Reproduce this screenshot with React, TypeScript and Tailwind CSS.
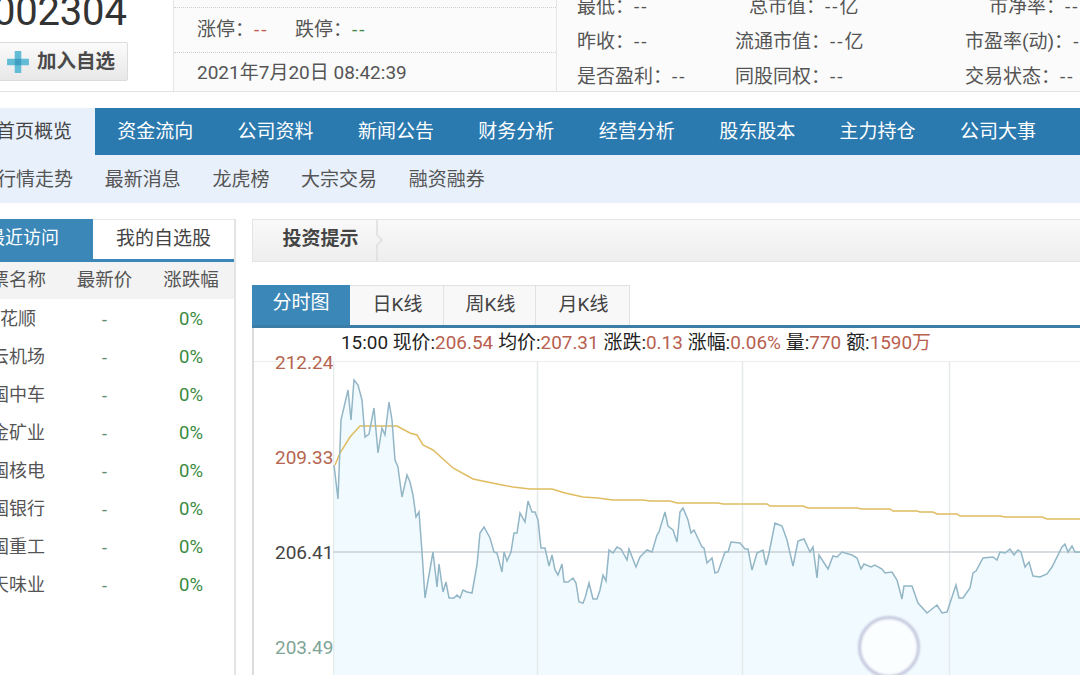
const price = "334,465 338,499 341,420 348,390 351,420 354,380 358,385 362,400 365,437 369,434 374,408 378,453 382,428 385,435 389,402 392,420 395,460 398,467 399,475 402,497 407,475 410,482 413,495 416,517 419,512 422,552 425,598 433,552 437,587 439,564 443,592 446,582 449,598 454,598 457,595 460,598 463,590 467,592 472,593 477,565 480,533 484,527 490,538 494,552 497,553 502,572 504,552 507,561 511,552 514,533 517,533 520,513 525,522 528,501 532,512 535,512 538,520 541,548 545,548 549,566 552,555 555,570 558,575 562,564 564,582 568,582 573,578 576,583 579,602 583,603 585,598 589,583 593,599 597,599 600,590 603,575 606,581 609,550 613,553 617,547 621,549 627,560 629,549 636,567 640,557 647,550 652,552 657,535 659,532 665,512 668,526 673,530 677,542 680,512 683,508 688,520 691,533 694,530 702,547 704,548 707,563 712,558 715,573 718,572 725,552 728,552 731,542 740,543 745,549 748,549 752,570 757,553 763,550 766,565 769,553 775,523 782,526 787,540 793,566 798,541 804,539 810,552 813,547 817,578 819,555 828,569 833,556 837,557 842,552 852,555 857,558 861,569 864,564 871,567 875,565 882,569 885,573 892,572 897,580 902,599 904,586 912,586 918,603 927,613 937,605 942,613 947,612 956,585 959,598 963,598 970,588 973,573 976,571 983,558 993,557 997,560 1000,552 1005,553 1010,549 1014,555 1018,550 1021,552 1025,567 1029,562 1033,576 1040,577 1047,574 1052,567 1062,547 1065,544 1068,552 1072,546 1075,552 1080,552";
const avg = "335,465 340,453 350,437 360,426 383,426 397,426 410,433 417,435 423,445 433,450 453,468 473,479 497,484 513,487 530,489 552,489 565,493 583,497 598,498 613,500 643,500 650,501 670,501 677,503 718,503 723,504 767,504 770,506 803,506 808,508 857,508 862,509 890,509 893,511 917,511 920,512 933,512 937,514 957,514 960,516 1000,516 1005,517 1042,517 1047,519 1080,519";

const nav = ["资金流向", "公司资料", "新闻公告", "财务分析", "经营分析", "股东股本", "主力持仓", "公司大事"];
const sub = ["最新消息", "龙虎榜", "大宗交易", "融资融券"];
const stocks = ["同花顺", "白云机场", "中国中车", "紫金矿业", "中国核电", "中国银行", "中国重工", "海天味业"];
const stats = [
  { a: "最低：", b: "总市值：", bv: "亿", c: "市净率：", bp: "pl-[14px]", cp: "pl-[24px]" },
  { a: "昨收：", b: "流通市值：", bv: "亿", c: "市盈率(动)：", bp: "", cp: "" },
  { a: "是否盈利：", b: "同股同权：", bv: "", c: "交易状态：", bp: "", cp: "" },
];
const ktabs = ["日K线", "周K线", "月K线"];
const ktabW = ["w-[94px]", "w-[92px]", "w-[94px]"];

function Dash({ className = "" }: { className?: string }) {
  return <span className={`tracking-[2px] ${className}`}>--</span>;
}

function Plus() {
  return (
    <svg width="24" height="24" viewBox="0 0 22 22" className="shrink-0 blur-[0.5px]">
      <path d="M8 1h6v7h7v6h-7v7H8v-7H1V8h7z" fill="#62bcd6" />
      <path d="M8 8h6v6H8z" fill="#3f9fc0" />
    </svg>
  );
}

export default function App() {
  return (
    <div className="relative w-[1080px] h-[675px] overflow-hidden bg-white text-[#555] text-[19px] font-[Roboto,'Noto_Sans_CJK_SC',sans-serif]">
      {/* header */}
      <div className="flex h-[92px] border-b border-[#e2e2e2]">
        <div className="w-[173px] shrink-0 overflow-hidden">
          <div className="-mt-[11px] -ml-[7px] text-[40px] leading-[46px] text-[#333] tracking-[-0.2px]">002304</div>
          <div className="-ml-[10px] mt-[7px] w-[138px] h-[39px] flex items-center gap-[7px] pl-[15px] rounded-[2px] border border-[#dcdcdc] bg-gradient-to-b from-[#fbfbfb] to-[#e8e8e8] text-[19.5px] font-bold text-[#4a4a4a]">
            <Plus />
            <span className="whitespace-nowrap">加入自选</span>
          </div>
        </div>
        <div className="w-[384px] shrink-0 border-x border-[#e6e6e6] bg-[#fbfbfb]">
          <div className="h-[8px] border-b border-dotted border-[#cfcfcf]" />
          <div className="h-[45px] flex items-center pl-[23px] border-b border-dotted border-[#cfcfcf]">
            <span>涨停：</span>
            <Dash className="text-[#c05a4a] w-[41px]" />
            <span>跌停：</span>
            <Dash className="text-[#3f8a45]" />
          </div>
          <div className="h-[38px] flex items-center pl-[23px] pt-[2px]">2021年7月20日 08:42:39</div>
        </div>
        <div className="flex-1 -mt-[10px] pl-[20px] bg-[#fbfbfb]">
          {stats.map((r) => (
            <div key={r.a} className="h-[35px] flex items-center whitespace-nowrap">
              <span className="w-[158px] shrink-0">{r.a}<Dash /></span>
              <span className={`w-[230px] shrink-0 ${r.bp}`}>{r.b}<Dash />{r.bv}</span>
              <span className={`shrink-0 ${r.cp}`}>{r.c}<Dash /></span>
            </div>
          ))}
        </div>
      </div>

      {/* main nav */}
      <div className="mt-[16px] flex h-[47px] bg-[#2a79af] text-white">
        <div className="w-[95px] shrink-0 bg-[#e8f0fb] text-[#444] flex items-center justify-end pr-[23px] pt-[2px] whitespace-nowrap">首页概览</div>
        {nav.map((n) => (
          <div key={n} className="w-[120.4px] shrink-0 flex items-center justify-center pt-[2px]">{n}</div>
        ))}
      </div>
      {/* sub nav */}
      <div className="flex items-center gap-[31.7px] h-[48px] bg-[#e8f0fb] -ml-[3px] pt-[2px]">
        <span>行情走势</span>
        {sub.map((s) => (
          <span key={s}>{s}</span>
        ))}
      </div>

      {/* body */}
      <div className="mt-[16px] flex gap-[16px]">
        {/* sidebar */}
        <div className="w-[236px] shrink-0 h-[456px] border-r-2 border-[#e4e4e4] overflow-hidden">
          <div className="flex h-[43px] border-b-[3px] border-[#3a87b8] border-t border-t-[#e8e8e8]">
            <div className="w-[93px] shrink-0 bg-[#3a87b8] text-white text-[18px] flex items-center justify-end pr-[34px] pb-[4px] whitespace-nowrap -mt-[1px]">最近访问</div>
            <div className="flex-1 flex items-center justify-center text-[#444]">我的自选股</div>
          </div>
          <div className="-ml-[49px] w-[285px] grid grid-cols-[116px_75px_94px] h-[37px] items-center text-center bg-[#f3f3f3] text-[18.5px]">
            <span>股票名称</span>
            <span>最新价</span>
            <span className="pl-[4px]">涨跌幅</span>
          </div>
          <div className="-ml-[49px] w-[285px] pt-[1px]">
            {stocks.map((s) => (
              <div key={s} className="grid grid-cols-[116px_75px_94px] h-[38px] items-center text-center text-[18px]">
                <span className="pb-[2px]">{s}</span>
                <span className="text-[#5d8f6e]">-</span>
                <span className="text-[#3a8a3f] text-[18.5px] pl-[4px] pt-[2px]">0%</span>
              </div>
            ))}
          </div>
        </div>

        {/* content */}
        <div className="flex-1 min-w-0">
          <div className="h-[43px] flex border-y border-[#e4e4e4] border-l bg-gradient-to-b from-[#f9f9f9] to-[#eeeeee]">
            <div className="relative w-[127px] flex items-center justify-center font-bold text-[#444] pl-[8px] pb-[2px]">
              投资提示
              <svg width="10" height="41" viewBox="0 0 10 41" className="absolute -right-[6px] top-0">
                <path d="M1 0v15l5 5-5 5v16" fill="none" stroke="#dedede" strokeWidth="1.5" />
              </svg>
            </div>
          </div>

          <div className="mt-[23px] flex h-[40px]">
            <div className="w-[98px] bg-[#3a87b8] text-white flex items-center justify-center pb-[3px]">分时图</div>
            {ktabs.map((t, i) => (
              <div key={t} className={`${ktabW[i]} bg-[#f8f8f9] border-t border-r border-[#e2e2e2] text-[#444] flex items-center justify-center pl-[2px]`}>{t}</div>
            ))}
          </div>
          <div className="h-[3px] bg-[#3a7ea8]" />

          <div className="border-l-2 border-[#dcdcdc] h-[347px]">
            <div className="h-[34px] pl-[87px] pb-[2px] flex items-center whitespace-nowrap text-[18.9px] text-[#222] border-b border-[#ececec]">
              <span>15:00 现价:</span><span className="text-[#b8604e]">206.54</span>
              <span className="ml-[5px]">均价:</span><span className="text-[#b8604e]">207.31</span>
              <span className="ml-[5px]">涨跌:</span><span className="text-[#b8604e]">0.13</span>
              <span className="ml-[5px]">涨幅:</span><span className="text-[#b8604e]">0.06%</span>
              <span className="ml-[5px]">量:</span><span className="text-[#b8604e]">770</span>
              <span className="ml-[5px]">额:</span><span className="text-[#b8604e]">1590万</span>
            </div>
            <div className="flex">
              <div className="w-[79px] shrink-0 pl-[21px] -mt-[10px] leading-[22px]">
                <div className="h-[95px] text-[#b5654f]">212.24</div>
                <div className="h-[95px] text-[#b5654f]">209.33</div>
                <div className="h-[95px] text-[#444]">206.41</div>
                <div className="h-[95px] text-[#7fa596]">203.49</div>
              </div>
              <svg viewBox="333 362 747 313" width="747" height="313" className="block shrink-0">
                <polygon points={`333,675 ${price} 1080,675`} fill="#f1fbff" />
                <path d="M333.5 362V675M537.5 362V675M742.5 362V675M949.5 362V675" stroke="#e6e9ec" strokeWidth="1.5" fill="none" />
                <path d="M333 552H1080" stroke="#c8d0d4" strokeWidth="1.5" fill="none" />
                <polyline points={avg} fill="none" stroke="#e0bc60" strokeWidth="1.5" />
                <polyline points={price} fill="none" stroke="#93b6c6" strokeWidth="1.5" />
              </svg>
            </div>
          </div>
        </div>
      </div>

      {/* touch indicator */}
      <div className="absolute left-[858px] top-[616px] w-[62px] h-[62px] rounded-full border-[3px] border-[#c3c6dc] bg-white/70 blur-[0.8px]" />
    </div>
  );
}
